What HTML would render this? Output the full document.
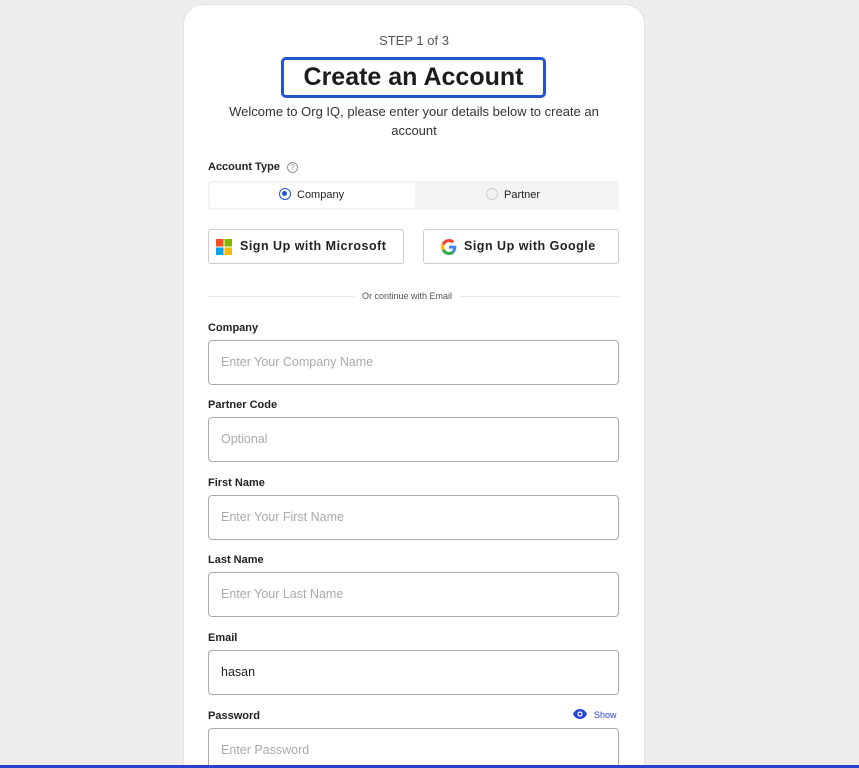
<!DOCTYPE html>
<html><head><style>
*{box-sizing:border-box;margin:0;padding:0}
html,body{width:859px;height:768px;overflow:hidden}
body{background:#ededed;font-family:"Liberation Sans",sans-serif;position:relative;color:#222}
.card{position:absolute;left:183px;top:4px;width:462px;height:780px;background:#fff;border:1px solid #e2e2e2;border-radius:20px}
.in{position:absolute;left:0;top:1px;width:460px;height:770px}
.abs{position:absolute}
.step{left:0;width:460px;top:27px;text-align:center;font-size:13px;color:#555}
.title{left:97px;top:51px;width:265px;height:41px;border:3px solid #2255cc;border-radius:5px;text-align:center;font-size:25px;font-weight:bold;line-height:35px;color:#1c1c1c}
.sub{left:30px;width:400px;top:96px;text-align:center;font-size:13px;line-height:19px;color:#333}
.lbl{font-size:11px;font-weight:bold;color:#222;left:24px}
.inp{left:24px;width:411px;height:45px;border:1px solid #aaa;border-radius:4px;font-size:12.5px;color:#aaa;padding-left:12px;line-height:43px}
.btn{width:196px;height:35px;border:1px solid #ccc;border-radius:3px;font-size:12.5px;font-weight:bold;letter-spacing:0.5px;line-height:33px;color:#222}
</style></head><body>
<div class="card"><div class="in">
<div class="abs step">STEP 1 of 3</div>
<div class="abs title">Create an Account</div>
<div class="abs sub">Welcome to Org IQ, please enter your details below to create an account</div>
<div class="abs lbl" style="top:155px">Account Type <span style="display:inline-block;width:11px;height:11px;border:1px solid #999;border-radius:50%;font-size:8px;line-height:9px;text-align:center;color:#999;font-weight:normal;margin-left:4px">?</span></div>
<div class="abs" style="left:24px;top:175px;width:411px;height:29px;background:#f3f3f3;border-radius:3px"></div>
<div class="abs" style="left:26px;top:177px;width:205px;height:25px;background:#fff;border-radius:3px;font-size:11px;line-height:25px;text-align:left;padding-left:69px"><span style="display:inline-block;width:12px;height:12px;border:1.5px solid #2255cc;border-radius:50%;vertical-align:-2px;margin-right:6px;position:relative"><span style="position:absolute;left:2px;top:2px;width:5px;height:5px;background:#2255cc;border-radius:50%"></span></span>Company</div>
<div class="abs" style="left:302px;top:177px;font-size:11px;line-height:25px"><span style="display:inline-block;width:12px;height:12px;border:1px solid #ccc;border-radius:50%;vertical-align:-2px;margin-right:6px"></span>Partner</div>
<div class="abs btn" style="left:24px;top:223px"><svg width="16" height="16" style="position:absolute;left:7px;top:9px"><rect width="7.5" height="7.5" fill="#f25022"/><rect x="8.5" width="7.5" height="7.5" fill="#7fba00"/><rect y="8.5" width="7.5" height="7.5" fill="#00a4ef"/><rect x="8.5" y="8.5" width="7.5" height="7.5" fill="#ffb900"/></svg><span style="position:absolute;left:31px">Sign Up with Microsoft</span></div>
<div class="abs btn" style="left:239px;top:223px"><svg width="16" height="16" viewBox="0 0 48 48" style="position:absolute;left:17px;top:9px"><path fill="#EA4335" d="M24 9.5c3.5 0 6.6 1.2 9.1 3.6l6.8-6.8C35.8 2.4 30.3 0 24 0 14.6 0 6.6 5.4 2.6 13.3l7.9 6.2C12.4 13.6 17.7 9.5 24 9.5z"/><path fill="#4285F4" d="M46.1 24.5c0-1.6-.1-3.1-.4-4.5H24v9h12.4c-.5 2.9-2.2 5.3-4.6 7l7.5 5.8c4.4-4 6.8-10 6.8-17.3z"/><path fill="#FBBC05" d="M10.5 28.6c-.5-1.4-.8-3-.8-4.6s.3-3.2.8-4.6l-7.9-6.2C.9 16.5 0 20.1 0 24s.9 7.5 2.6 10.8l7.9-6.2z"/><path fill="#34A853" d="M24 48c6.5 0 11.9-2.1 15.9-5.8l-7.5-5.8c-2.1 1.4-4.9 2.3-8.4 2.3-6.3 0-11.6-4.1-13.5-9.8l-7.9 6.2C6.6 42.6 14.6 48 24 48z"/></svg><span style="position:absolute;left:40px">Sign Up with Google</span></div>
<div class="abs" style="left:24px;top:290px;width:411px;height:1px;background:#e5e5e5"></div>
<div class="abs" style="left:170px;top:285px;background:#fff;padding:0 8px;font-size:9px;color:#555">Or continue with Email</div>
<div class="abs lbl" style="top:316px">Company</div>
<div class="abs inp" style="top:334px">Enter Your Company Name</div>
<div class="abs lbl" style="top:393px">Partner Code</div>
<div class="abs inp" style="top:411px">Optional</div>
<div class="abs lbl" style="top:471px">First Name</div>
<div class="abs inp" style="top:489px">Enter Your First Name</div>
<div class="abs lbl" style="top:548px">Last Name</div>
<div class="abs inp" style="top:566px">Enter Your Last Name</div>
<div class="abs lbl" style="top:626px">Email</div>
<div class="abs inp" style="top:644px;color:#222">hasan</div>
<div class="abs lbl" style="top:704px">Password</div>
<div class="abs" style="left:389px;top:703px;font-size:9px;color:#2a45d8"><svg width="14" height="10" viewBox="0 0 14 10" style="vertical-align:-1px;margin-right:7px"><path d="M7 0C3.5 0 1 2.5 0 5c1 2.5 3.5 5 7 5s6-2.5 7-5C13 2.5 10.5 0 7 0z" fill="#2a45d8"/><circle cx="7" cy="5" r="2.6" fill="#fff"/><circle cx="7" cy="5" r="1.4" fill="#2a45d8"/></svg>Show</div>
<div class="abs inp" style="top:722px">Enter Password</div>
</div></div>
<div class="abs" style="left:0;top:765px;width:859px;height:3px;background:#2a3fcf"></div>
</body></html>
